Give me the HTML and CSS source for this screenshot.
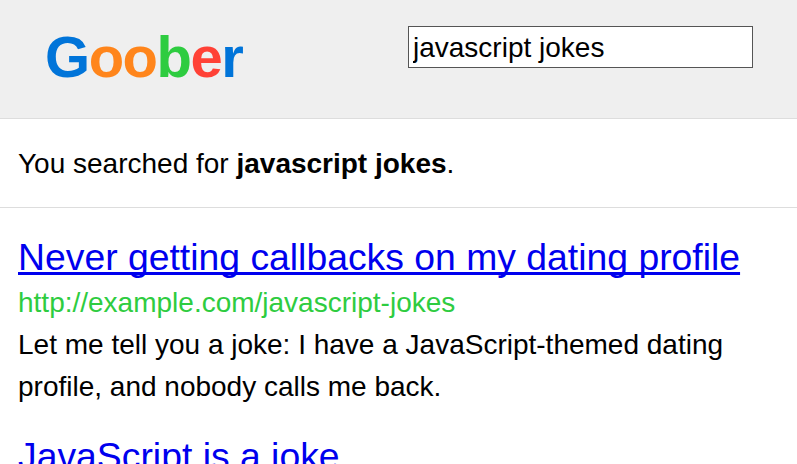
FILE: index.html
```html
<!DOCTYPE html>
<html lang="en">
<head>
<meta charset="utf-8">
<title>Goober</title>
<link rel="stylesheet" href="styles.css">
</head>
<body>
<header class="header">
<h1 class="logo"><span class="blue">G</span><span class="orange">oo</span><span class="green">b</span><span class="red">e</span><span class="blue">r</span></h1>
<input class="search" type="text" value="javascript jokes" aria-label="Search">
</header>
<p class="summary">You searched for <strong>javascript jokes</strong>.</p>
<main class="results">
<article class="result">
<a class="title" href="#">Never getting callbacks on my dating profile</a>
<div class="url">http://example.com/javascript-jokes</div>
<p class="text">Let me tell you a joke: I have a JavaScript-themed dating profile, and nobody calls me back.</p>
</article>
<article class="result">
<a class="title" href="#">JavaScript is a joke</a>
</article>
</main>
</body>
</html>
```
FILE: styles.css
```css
* { box-sizing: border-box; }
body {
  margin: 0;
  height: 464px;
  overflow: hidden;
  background: #fff;
  color: #000;
  font: 28px/42px "Liberation Sans", Arial, sans-serif;
}
.header {
  display: flex;
  justify-content: space-between;
  align-items: flex-start;
  height: 119px;
  padding: 26px 44px 0 45px;
  background: #efefef;
  border-bottom: 1px solid #ddd;
}
.logo {
  margin: 0;
  font-size: 58px;
  line-height: 62px;
  letter-spacing: -1.5px;
}
.blue { color: #0074d9; }
.orange { color: #ff851b; }
.green { color: #2ecc40; }
.red { color: #ff4136; }
.search {
  width: 345px;
  height: 42px;
  padding: 2px 4px 0;
  border: 1px solid #555;
  border-radius: 0;
  background: #fff;
  color: #000;
  font: inherit;
}
.summary {
  margin: 0;
  height: 89px;
  padding: 24px 18px 0;
  border-bottom: 1px solid #ddd;
}
.results { padding: 27px 18px 0; }
.result { margin-bottom: 26px; }
.title {
  display: block;
  margin-bottom: 3px;
  font-size: 37.33px;
  line-height: 44px;
  color: #0000ee;
  white-space: nowrap;
  text-decoration-thickness: 3px;
  text-underline-offset: 2px;
  text-decoration-skip-ink: none;
}
.url { color: #2ecc40; }
.text { margin: 0; }
```
